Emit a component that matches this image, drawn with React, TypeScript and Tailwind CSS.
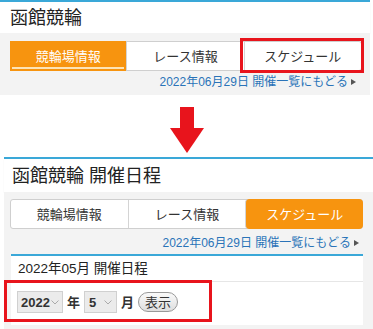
const font = "font-['Liberation_Sans','Noto_Sans_CJK_JP',sans-serif]";

const tabs = ["競輪場情報", "レース情報", "スケジュール"];

function Tabs({ active, rounded }: { active: number; rounded?: boolean }) {
  return (
    <div className="flex h-[30px] rounded-[3px] border border-[#cfcfcf] bg-white text-[13px] leading-none">
      {tabs.map((t, i) => (
        <div
          key={t}
          className={`relative flex flex-1 items-center justify-center ${i > 0 ? "border-l border-[#d4d4d4]" : ""} ${
            i === active ? `bg-[#f7940f] text-white ${rounded ? "-my-px -mr-px rounded-[4px]" : "-my-px -ml-px"}` : "text-[#333]"
          }`}
        >
          {t}
          {i === active && !rounded && <div className="absolute bottom-[2px] left-[2px] right-[2px] h-[2px] bg-[#fde3b5]" />}
        </div>
      ))}
    </div>
  );
}

function BackLink() {
  return (
    <div className="flex h-[16px] items-center justify-end gap-[3px] pr-[14px] text-[12px] leading-[16px] text-[#2a73b8]">
      <span>2022年06月29日 開催一覧にもどる</span>
      <svg width="5" height="6" viewBox="0 0 5 6">
        <path d="M0 0L5 3L0 6Z" fill="#555" />
      </svg>
    </div>
  );
}

function Chevron() {
  return (
    <svg width="8" height="5" viewBox="0 0 8 5" fill="none" stroke="#aaa" strokeWidth="1">
      <path d="M0.5 0.5L4 4L7.5 0.5" />
    </svg>
  );
}

export default function App() {
  return (
    <div className={`relative h-[329px] w-[373px] overflow-hidden bg-white ${font}`}>
      {/* before */}
      <div className="w-[370px] border-t-2 border-[#3aa8d8]">
        <div className="flex h-[31px] items-center pl-[10px] text-[18px] leading-none text-[#222] shadow-[0_1px_1px_rgba(0,0,0,0.08)]">
          函館競輪
        </div>
        <div className="bg-[#f3f3f3] pt-[8px] pb-[5px]">
          <div className="pl-[10px] pr-[8px]">
            <Tabs active={0} />
          </div>
          <div className="mt-[3px]">
            <BackLink />
          </div>
        </div>
      </div>

      {/* arrow */}
      <div className="flex h-[62px] flex-col items-center pt-[12px] pl-[1px]">
        <div className="h-[21px] w-[14px] bg-[#e8141c]" />
        <div className="h-0 w-0 border-x-[17px] border-t-[25px] border-x-transparent border-t-[#e8141c]" />
      </div>

      {/* after */}
      <div className="ml-[4px] border-t-2 border-[#3aa8d8]">
        <div className="flex h-[33px] items-center pl-[8px] text-[18px] leading-none text-[#222] shadow-[0_1px_1px_rgba(0,0,0,0.08)]">
          函館競輪 開催日程
        </div>
        <div className="h-[140px] bg-[#f3f3f3] pt-[7px]">
          <div className="pl-[6px] pr-[10px]">
            <Tabs active={2} rounded />
          </div>
          <div className="mt-[6px]">
            <BackLink />
          </div>
          <div className="mt-[3px] ml-[7px] mr-[10px] border-t-2 border-[#3aa8d8] bg-white">
            <div className="flex h-[26px] items-center border-b border-[#e6e6e6] pl-[7px] text-[13.5px] leading-none text-[#222]">
              2022年05月 開催日程
            </div>
            <div className="flex items-center gap-[4px] pl-[6px] pt-[9px] pb-[12px] text-[13px] leading-none font-bold text-[#333]">
              <div className="flex h-[22px] w-[46px] items-center justify-between border border-[#d0d0d0] bg-[#ebebeb] pl-[3px] pr-[3px]">
                <span>2022</span>
                <Chevron />
              </div>
              <span>年</span>
              <div className="flex h-[22px] w-[33px] items-center justify-between border border-[#d0d0d0] bg-[#ebebeb] px-[4px]">
                <span>5</span>
                <Chevron />
              </div>
              <span>月</span>
              <div className="flex h-[20px] w-[40px] items-center justify-center rounded-full border border-[#999] bg-gradient-to-b from-[#fafafa] to-[#dedede] text-[13px] font-normal text-[#333]">
                表示
              </div>
            </div>
          </div>
        </div>
      </div>

      {/* highlight boxes */}
      <div className="absolute left-[240px] top-[38px] h-[35px] w-[124px] border-[3px] border-[#e8141c]" />
      <div className="absolute left-[4px] top-[280px] h-[42px] w-[208px] border-[3px] border-[#e8141c]" />
    </div>
  );
}
